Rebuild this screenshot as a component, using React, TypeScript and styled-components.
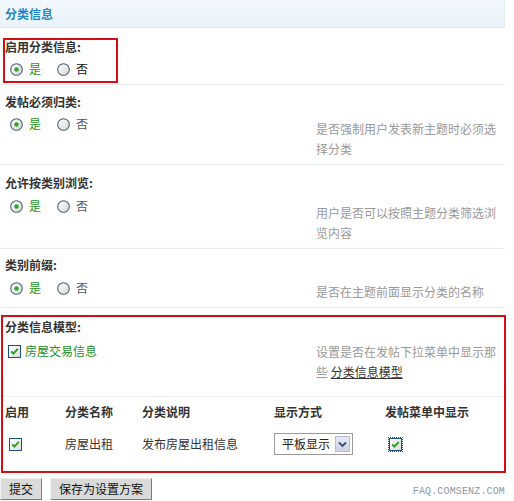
import React from "react";
import styled, { createGlobalStyle } from "styled-components";

const GlobalStyle = createGlobalStyle`
  *, *::before, *::after { box-sizing: border-box; }
  html, body { margin: 0; padding: 0; background: #fff; }
  body {
    font-family: "Noto Sans CJK SC", "Liberation Sans", sans-serif;
    font-size: 12px;
    color: #333;
  }
`;

const Page = styled.div`
  width: 506px;
`;

const Header = styled.div`
  width: 505px;
  height: 28px;
  line-height: 27px;
  padding-left: 5px;
  background: linear-gradient(#f2f8fd, #eaf3fb);
  border-bottom: 1px solid #dbe8f4;
  border-right: 1px solid #e2ecf5;
  font-weight: bold;
  color: #1f86c6;
`;

const Settings = styled.div`
  padding-top: 2px;
`;

const Block = styled.div<{ $pt?: number; $pb?: number; $last?: boolean }>`
  position: relative;
  width: 505px;
  padding: ${(p) => p.$pt ?? 7}px 0 ${(p) => p.$pb ?? 5}px;
  border-bottom: ${(p) => (p.$last ? "none" : "1px solid #e4ebf2")};
`;

const Title = styled.div`
  line-height: 20px;
  padding-left: 5px;
  font-weight: bold;
  color: #333;
`;

const Body = styled.div<{ $gap?: number }>`
  display: flex;
  margin-top: ${(p) => p.$gap ?? 2}px;
`;

const Options = styled.div<{ $pl?: number }>`
  flex: 0 0 316px;
  height: 20px;
  display: flex;
  align-items: center;
  padding-left: ${(p) => p.$pl ?? 10}px;
`;

const Desc = styled.div<{ $pt?: number }>`
  width: 186px;
  padding-top: ${(p) => p.$pt ?? 5}px;
  line-height: 20px;
  color: #999;
`;

const DescLink = styled.span`
  color: #333;
  text-decoration: underline;
`;

const Option = styled.label`
  display: inline-flex;
  align-items: center;
  gap: 6px;
  margin-right: 16px;
  line-height: 20px;
`;

const OptionText = styled.span<{ $on: boolean; $dark?: boolean }>`
  color: ${(p) => (p.$on ? "#1f951f" : p.$dark ? "#111" : "#555")};
`;

const CheckLabel = styled.label`
  display: inline-flex;
  align-items: center;
  gap: 4px;
  color: #2a8f2a;
  line-height: 20px;
`;

const Highlight = styled.div<{ $t: number; $l: number; $w: number; $h: number }>`
  position: absolute;
  top: ${(p) => p.$t}px;
  left: ${(p) => p.$l}px;
  width: ${(p) => p.$w}px;
  height: ${(p) => p.$h}px;
  border: 2px solid #d10f14;
  pointer-events: none;
`;

const ModelRow = styled.div`
  display: flex;
  margin-top: 4px;
  padding-bottom: 14px;
  border-bottom: 1px solid #eef2f6;
`;

const Grid = styled.div`
  display: grid;
  grid-template-columns: 60px 77px 132px 111px 1fr;
  padding-left: 5px;
  padding-top: 5px;
  row-gap: 12px;
  align-items: center;
`;

const HeadCell = styled.div`
  line-height: 20px;
  font-weight: bold;
  color: #333;
`;

const Cell = styled.div<{ $pl?: number }>`
  line-height: 20px;
  height: 20px;
  display: flex;
  align-items: center;
  padding-left: ${(p) => p.$pl ?? 0}px;
  color: #333;
`;

const Select = styled.div`
  width: 79px;
  height: 22px;
  border: 1px solid #9a9a9a;
  display: flex;
  align-items: center;
  justify-content: space-between;
  padding: 0 2px 0 7px;
  color: #222;
  background: #fff;
`;

const SelectButton = styled.span`
  width: 15px;
  height: 16px;
  border: 1px solid #b6bdd6;
  background: linear-gradient(#e6e8f3, #cfd3e6);
  display: flex;
  align-items: center;
  justify-content: center;
`;

const Focus = styled.span`
  display: inline-flex;
  outline: 1px dotted #444;
  outline-offset: 0px;
`;

const Footer = styled.div`
  width: 505px;
  display: flex;
  align-items: center;
  margin-top: 10px;
`;

const Button = styled.button`
  height: 22px;
  padding: 0 8px;
  margin-right: 8px;
  font-family: "Noto Sans CJK SC", sans-serif;
  font-size: 12px;
  line-height: 20px;
  color: #111;
  background: #dadada;
  border: 1px solid;
  border-color: #f2f2f2 #7c7c7c #7c7c7c #f2f2f2;
  border-radius: 0;
`;

const Watermark = styled.span`
  margin-left: auto;
  margin-top: 4px;
  font-family: "Liberation Mono", monospace;
  font-size: 10px;
  letter-spacing: 0.15px;
  color: #8d99a6;
`;

const RadioIcon = ({ on }: { on: boolean }) => (
  <svg width="13" height="13" viewBox="0 0 13 13">
    <defs>
      <linearGradient id={`rg${on ? 1 : 0}`} x1="0" y1="0" x2="1" y2="1">
        <stop offset="0" stopColor="#ffffff" />
        <stop offset="1" stopColor="#d6d6cf" />
      </linearGradient>
    </defs>
    <circle cx="6.5" cy="6.5" r="5.8" fill={`url(#rg${on ? 1 : 0})`} stroke="#4a6079" strokeWidth="1.1" />
    {on && <circle cx="6.5" cy="6.5" r="2.2" fill="#2ea52e" />}
  </svg>
);

const CheckIcon = () => (
  <svg width="13" height="13" viewBox="0 0 13 13">
    <defs>
      <linearGradient id="cg" x1="0" y1="0" x2="1" y2="1">
        <stop offset="0" stopColor="#ffffff" />
        <stop offset="1" stopColor="#dcdcd4" />
      </linearGradient>
    </defs>
    <rect x="0.5" y="0.5" width="12" height="12" fill="url(#cg)" stroke="#1c4f7e" />
    <path d="M3.2 6.3 L5.4 8.6 L9.8 3.9" fill="none" stroke="#22a122" strokeWidth="1.9" />
  </svg>
);

const Chevron = () => (
  <svg width="9" height="7" viewBox="0 0 9 7">
    <path d="M1 1.5 L4.5 5 L8 1.5" fill="none" stroke="#3d4e74" strokeWidth="1.8" />
  </svg>
);

const YesNo = ({ dark }: { dark?: boolean }) => (
  <Options>
    <Option>
      <RadioIcon on />
      <OptionText $on>是</OptionText>
    </Option>
    <Option>
      <RadioIcon on={false} />
      <OptionText $on={false} $dark={dark}>否</OptionText>
    </Option>
  </Options>
);

const settings = [
  { title: "发帖必须归类:", desc: "是否强制用户发表新主题时必须选择分类", pt: 7, gap: 2, dpt: 5 },
  { title: "允许按类别浏览:", desc: "用户是否可以按照主题分类筛选浏览内容", pt: 8, gap: 3, dpt: 7 },
  { title: "类别前缀:", desc: "是否在主题前面显示分类的名称", pt: 6, gap: 3, dpt: 4 },
];

export default function App() {
  return (
    <Page>
      <GlobalStyle />
      <Header>分类信息</Header>
      <Settings>
        <Block>
          <Title>启用分类信息:</Title>
          <Body>
            <YesNo dark />
          </Body>
          <Highlight $t={8} $l={3} $w={115} $h={45} />
        </Block>
        {settings.map((s) => (
          <Block key={s.title} $pt={s.pt}>
            <Title>{s.title}</Title>
            <Body $gap={s.gap}>
              <YesNo />
              <Desc $pt={s.dpt}>{s.desc}</Desc>
            </Body>
          </Block>
        ))}
        <Block $pt={9} $pb={14} $last>
          <Title>分类信息模型:</Title>
          <ModelRow>
            <Options $pl={8}>
              <CheckLabel>
                <CheckIcon />
                房屋交易信息
              </CheckLabel>
            </Options>
            <Desc $pt={1}>
              <span>设置是否在发帖下拉菜单中显示那</span>
              <span>些 </span>
              <DescLink>分类信息模型</DescLink>
            </Desc>
          </ModelRow>
          <Grid>
            <HeadCell>启用</HeadCell>
            <HeadCell>分类名称</HeadCell>
            <HeadCell>分类说明</HeadCell>
            <HeadCell>显示方式</HeadCell>
            <HeadCell>发帖菜单中显示</HeadCell>
            <Cell $pl={4}>
              <CheckIcon />
            </Cell>
            <Cell>房屋出租</Cell>
            <Cell>发布房屋出租信息</Cell>
            <Cell>
              <Select>
                平板显示
                <SelectButton>
                  <Chevron />
                </SelectButton>
              </Select>
            </Cell>
            <Cell $pl={4}>
              <Focus>
                <CheckIcon />
              </Focus>
            </Cell>
          </Grid>
          <Highlight $t={7} $l={1} $w={505} $h={158} />
        </Block>
      </Settings>
      <Footer>
        <Button>提交</Button>
        <Button>保存为设置方案</Button>
        <Watermark>FAQ.COMSENZ.COM</Watermark>
      </Footer>
    </Page>
  );
}
